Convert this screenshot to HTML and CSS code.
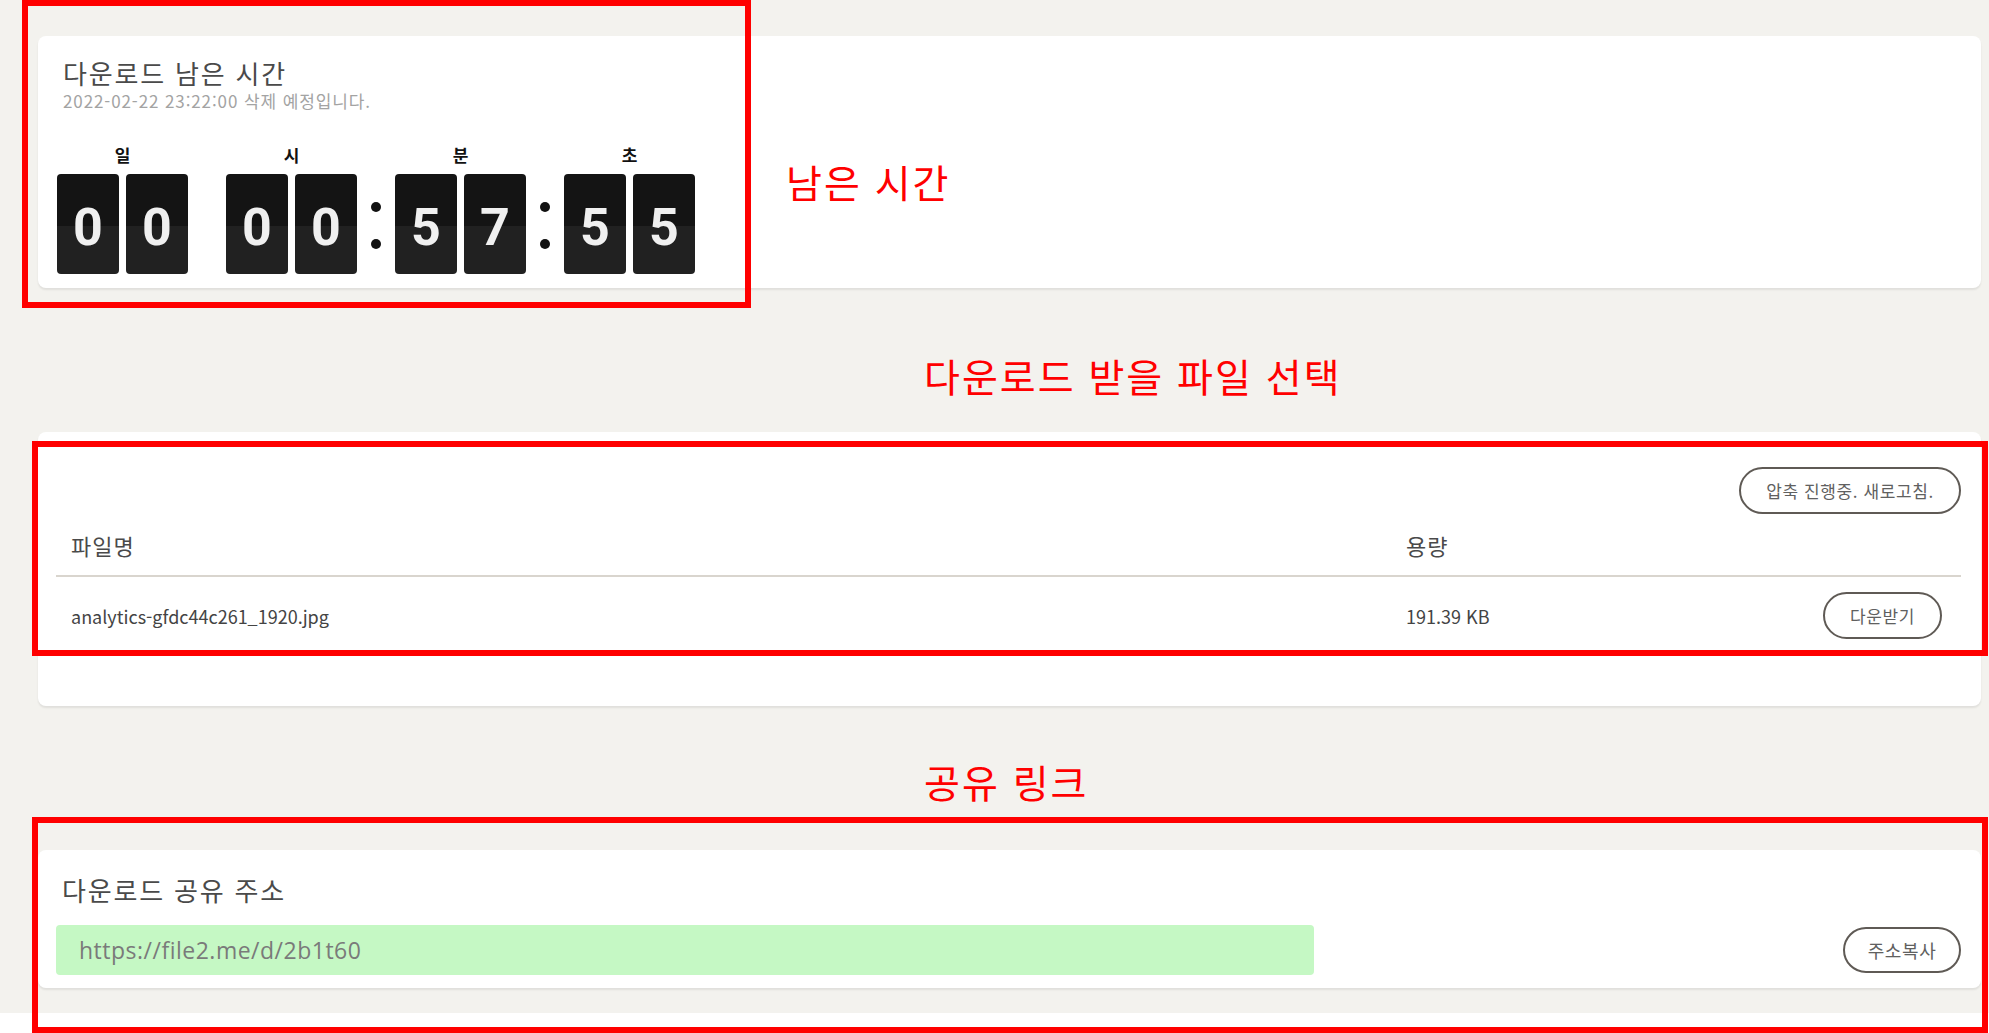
FILE: index.html
```html
<!DOCTYPE html>
<html lang="ko">
<head>
    <meta charset="UTF-8">
    <meta name="viewport" content="width=device-width, initial-scale=1.0">
    <title>파일 다운로드</title>
    <link rel="stylesheet" href="styles.css">
</head>
<body>

    <div class="page">

        <section class="card timer-card">
            <h2 class="card-title">다운로드 남은 시간</h2>
            <p class="card-sub">2022-02-22 23:22:00 삭제 예정입니다.</p>

            <div class="countdown">
                <div class="unit">
                    <span class="unit-label">일</span>
                    <div class="digits"><span class="digit">0</span><span class="digit">0</span></div>
                </div>
                <div class="sep"></div>
                <div class="unit">
                    <span class="unit-label">시</span>
                    <div class="digits"><span class="digit">0</span><span class="digit">0</span></div>
                </div>
                <div class="sep colon"><i></i><i></i></div>
                <div class="unit">
                    <span class="unit-label">분</span>
                    <div class="digits"><span class="digit">5</span><span class="digit">7</span></div>
                </div>
                <div class="sep colon"><i></i><i></i></div>
                <div class="unit">
                    <span class="unit-label">초</span>
                    <div class="digits"><span class="digit">5</span><span class="digit">5</span></div>
                </div>
            </div>
        </section>

        <div class="note note-files">다운로드 받을 파일 선택</div>

        <section class="card files-card">
            <div class="toolbar">
                <button class="pill pill-wide">압축 진행중. 새로고침.</button>
            </div>
            <table class="files">
                <thead>
                    <tr>
                        <th class="col-name">파일명</th>
                        <th class="col-size">용량</th>
                        <th class="col-action"></th>
                    </tr>
                </thead>
                <tbody>
                    <tr>
                        <td>analytics-gfdc44c261_1920.jpg</td>
                        <td>191.39 KB</td>
                        <td class="col-action"><button class="pill">다운받기</button></td>
                    </tr>
                </tbody>
            </table>
        </section>

        <div class="note note-link">공유 링크</div>

        <section class="card link-card">
            <h2 class="card-title">다운로드 공유 주소</h2>
            <div class="share-row">
                <input class="share-url" type="text" value="https://file2.me/d/2b1t60" readonly>
                <button class="pill">주소복사</button>
            </div>
        </section>

    </div>

    <!-- annotation overlays -->
    <div class="mark mark-timer"></div>
    <div class="mark mark-files"></div>
    <div class="mark mark-link"></div>
    <div class="note note-timer">남은 시간</div>

</body>
</html>
```

FILE: styles.css
```css
body {
    margin: 0;
    background-color: #ffffff;
    font-family: "Noto Sans CJK KR", "Noto Sans", sans-serif;
    color: #444;
}
.page {
    background-color: #f3f2ee;
    padding: 36px 8px 25px 38px;
}
.card {
    background-color: #ffffff;
    border-radius: 8px;
    box-shadow: 0 2px 2px rgba(0, 0, 0, 0.08);
}
.card-title {
    margin: 0;
    font-size: 26px;
    font-weight: 400;
    line-height: 31px;
    letter-spacing: 1.8px;
    color: #4a4a4a;
}
.card-sub {
    margin: 2px 0 0;
    font-size: 17px;
    line-height: 22px;
    letter-spacing: 0.9px;
    color: #a3a3a3;
}

/* timer */
.timer-card {
    padding: 21px 25px 14px;
}
.countdown {
    display: flex;
    align-items: flex-end;
    margin: 33px 0 0 -6px;
}
.unit {
    display: flex;
    flex-direction: column;
    align-items: center;
}
.unit-label {
    font-size: 17px;
    font-weight: 700;
    line-height: 20px;
    color: #111;
    margin-bottom: 9px;
}
.digits {
    display: flex;
    gap: 7px;
}
.digit {
    width: 62px;
    height: 100px;
    box-sizing: border-box;
    padding-top: 8px;
    line-height: 92px;
    text-align: center;
    border-radius: 4px;
    background: linear-gradient(#141414 0, #141414 52%, #212121 52%, #212121 100%);
    color: #f0f0f0;
    font-family: Roboto, "Liberation Sans", sans-serif;
    font-size: 52px;
    font-weight: 700;
}
.sep {
    width: 38px;
    height: 100px;
}
.colon {
    display: flex;
    flex-direction: column;
    align-items: center;
    justify-content: center;
    gap: 27px;
    padding-top: 2px;
    box-sizing: border-box;
}
.colon i {
    width: 10px;
    height: 10px;
    border-radius: 50%;
    background-color: #111;
}

/* file list */
.files-card {
    padding: 35px 20px 52px 18px;
}
.toolbar {
    display: flex;
    justify-content: flex-end;
}
.pill {
    height: 47px;
    padding: 0 19px;
    background-color: #ffffff;
    border: 2px solid #5f5a55;
    border-radius: 24px;
    font-family: "Noto Sans CJK KR", sans-serif;
    font-size: 17px;
    letter-spacing: 0.6px;
    color: #606060;
    cursor: pointer;
}
.pill-wide {
    width: 222px;
    padding: 0;
}
.files {
    width: 100%;
    border-collapse: collapse;
}
.files th {
    height: 61px;
    padding: 0 15px;
    text-align: left;
    font-size: 22px;
    font-weight: 400;
    letter-spacing: 1px;
    color: #4a4a4a;
    border-bottom: 2px solid #d9d5ce;
}
.files td {
    height: 47px;
    padding: 15px;
    font-size: 18px;
    color: #444;
}
.col-name {
    width: 1305px;
}
.col-size {
    width: 270px;
}
.files .col-action {
    text-align: right;
    padding-right: 19px;
}
.files td .pill {
    width: 119px;
    padding: 0;
}

/* share link */
.link-card {
    padding: 24px 20px 13px 18px;
}
.link-card .card-title {
    padding-left: 6px;
}
.share-row {
    display: flex;
    justify-content: space-between;
    align-items: center;
    margin-top: 20px;
}
.share-url {
    width: 1258px;
    height: 50px;
    box-sizing: border-box;
    padding: 0 23px;
    background-color: #c5f8c4;
    border: none;
    border-radius: 4px;
    font-family: "Open Sans", "Noto Sans", sans-serif;
    font-size: 23px;
    letter-spacing: 0.5px;
    color: #7a7a7a;
    outline: none;
}
.share-row .pill {
    width: 118px;
    height: 46px;
    padding: 0;
    font-size: 18px;
}

/* red annotations */
.note {
    font-size: 39px;
    line-height: 39px;
    letter-spacing: 2px;
    color: #ff0000;
    padding-left: 886px;
}
.note-files {
    padding-top: 68px;
    padding-bottom: 37px;
}
.note-link {
    padding-top: 56px;
    padding-bottom: 49px;
}
.note-timer {
    position: absolute;
    left: 786px;
    top: 162px;
    padding: 0;
}
.mark {
    position: absolute;
    border: 6px solid #ff0000;
    box-sizing: border-box;
}
.mark-timer {
    left: 22px;
    top: 0;
    width: 729px;
    height: 308px;
}
.mark-files {
    left: 32px;
    top: 441px;
    width: 1956px;
    height: 215px;
}
.mark-link {
    left: 32px;
    top: 817px;
    width: 1956px;
    height: 216px;
}
```
